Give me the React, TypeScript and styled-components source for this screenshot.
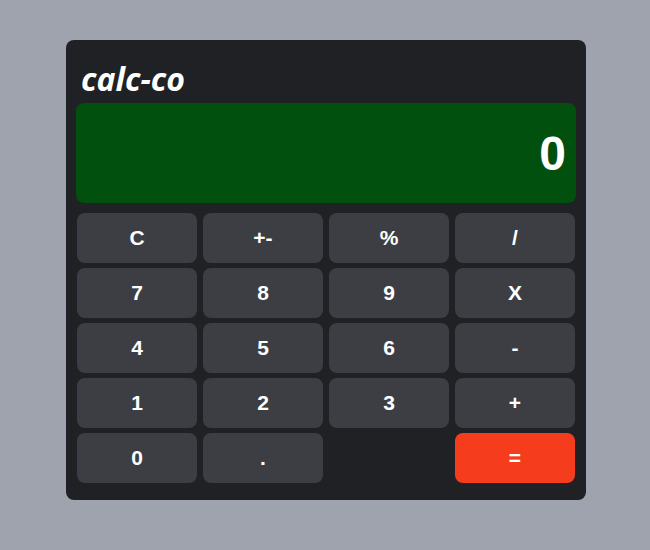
import React from 'react'
import styled, { createGlobalStyle } from 'styled-components'

const GlobalStyle = createGlobalStyle`
  html, body {
    margin: 0;
    padding: 0;
    background-color: #9ea3ae;
  }
  body {
    font-family: 'Liberation Sans', Arial, sans-serif;
  }
`

const Page = styled.div`
  width: 650px;
  height: 550px;
  padding: 40px 0 0 66px;
  box-sizing: border-box;
`

const Calculator = styled.div`
  width: 520px;
  height: 460px;
  background-color: #202124;
  border-radius: 8px;
  padding: 0 10px;
  box-sizing: border-box;
  display: flex;
  flex-direction: column;
`

const Brand = styled.h1`
  margin: 0;
  height: 63px;
  padding: 19px 0 0 5px;
  box-sizing: border-box;
  font-family: 'Open Sans', sans-serif;
  font-style: italic;
  font-weight: 700;
  font-size: 32px;
  line-height: 40px;
  color: #ffffff;
`

const Screen = styled.div`
  height: 100px;
  background-color: #02500e;
  border-radius: 8px;
  display: flex;
  align-items: center;
  justify-content: flex-end;
  padding-right: 10px;
  font-size: 48px;
  font-weight: 700;
  color: #ffffff;
`

const Keypad = styled.div`
  display: grid;
  grid-template-columns: repeat(4, 120px);
  grid-auto-rows: 50px;
  column-gap: 6px;
  row-gap: 5px;
  margin: 10px 1px 0;
`

const Key = styled.button<{ $accent?: boolean }>`
  border: none;
  border-radius: 8px;
  background-color: ${(props) => (props.$accent ? '#f53d1d' : '#3d3e44')};
  color: #ffffff;
  font-family: 'Liberation Sans', Arial, sans-serif;
  font-size: 21px;
  font-weight: 700;
  cursor: pointer;
  padding: 0;
`

const Spacer = styled.div``

const keys = ['C', '+-', '%', '/', '7', '8', '9', 'X', '4', '5', '6', '-', '1', '2', '3', '+', '0', '.']

export default function App() {
  return (
    <>
      <GlobalStyle />
      <Page>
        <Calculator>
          <Brand>calc-co</Brand>
          <Screen>0</Screen>
          <Keypad>
            {keys.map((k) => (
              <Key key={k}>{k}</Key>
            ))}
            <Spacer />
            <Key $accent>=</Key>
          </Keypad>
        </Calculator>
      </Page>
    </>
  )
}
